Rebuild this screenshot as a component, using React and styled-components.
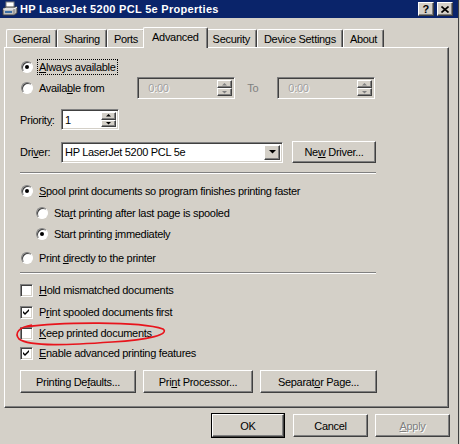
import styled, { createGlobalStyle, css } from 'styled-components'

const GlobalStyle = createGlobalStyle`
  html, body {
    margin: 0;
    padding: 0;
    background: #d4d0c8;
  }
  body {
    font-family: "Liberation Sans", Arial, sans-serif;
    font-size: 11px;
    letter-spacing: -0.3px;
    color: #000;
  }
  * { box-sizing: border-box; }
`

const raised = css`
  border: 1px solid;
  border-color: #fff #404040 #404040 #fff;
  box-shadow: inset -1px -1px #808080;
`

const sunken = css`
  border: 1px solid;
  border-color: #808080 #fff #fff #808080;
  box-shadow: inset 1px 1px #404040, inset -1px -1px #d4d0c8;
`

const Window = styled.div`
  position: relative;
  width: 459px;
  height: 444px;
  background: #d4d0c8;
  border-right: 1px solid #404040;
  display: flex;
  flex-direction: column;
`

const TitleBar = styled.div`
  height: 18px;
  background: #0a246a;
  color: #fff;
  display: flex;
  align-items: center;
  padding: 0 5px 0 2px;
  font-weight: bold;
  font-size: 11px;
  letter-spacing: 0.3px;
`

const Title = styled.span`
  flex: 1;
  margin-left: 2px;
`

const CaptionButton = styled.span`
  width: 16px;
  height: 14px;
  background: #d4d0c8;
  ${raised};
  color: #000;
  display: flex;
  align-items: center;
  justify-content: center;
  margin-left: ${p => p.$gap || 0}px;
  font-size: 11px;
  font-weight: bold;
`

const Body = styled.div`
  padding: 9px 0 0 4px;
`

const TabStrip = styled.div`
  display: flex;
  align-items: flex-end;
  padding-left: 2px;
  height: 20px;
  position: relative;
  z-index: 1;
`

const Tab = styled.div`
  height: 18px;
  padding: 1px 6px 0;
  display: flex;
  align-items: center;
  background: #d4d0c8;
  border-top: 1px solid #fff;
  border-left: 1px solid #fff;
  border-right: 1px solid #404040;
  box-shadow: inset -1px 0 #808080;
  border-radius: 2px 2px 0 0;

  ${p => p.$active && css`
    height: 21px;
    margin: 0 -2px -1px;
    padding: 0 8px 3px;
    position: relative;
    z-index: 2;
  `}
`

const Panel = styled.div`
  width: 445px;
  ${raised};
  padding: 9px 14px 14px 15px;
  display: flex;
  flex-direction: column;
`

const Row = styled.div`
  display: flex;
  align-items: center;
  height: ${p => p.$h || 20}px;
  margin-top: ${p => p.$mt || 0}px;
  padding-left: ${p => p.$indent || 0}px;
`

const RadioCircle = styled.span`
  width: 12px;
  height: 12px;
  flex-shrink: 0;
  margin-left: 1px;
  border-radius: 50%;
  position: relative;
  background: #fff;
  border: 1px solid;
  border-color: #808080 #fff #fff #808080;
  box-shadow: inset 1px 1px #404040;

  &::after {
    content: '';
    display: ${p => (p.$checked ? 'block' : 'none')};
    position: absolute;
    left: 3px;
    top: 3px;
    width: 4px;
    height: 4px;
    border-radius: 50%;
    background: #000;
  }
`

const CheckBox = styled.span`
  width: 13px;
  height: 13px;
  flex-shrink: 0;
  background: #fff;
  ${sunken};
  display: flex;
  align-items: center;
  justify-content: center;
`

const Label = styled.span`
  margin-left: ${p => p.$ml ?? 4}px;
  padding: 1px 1px;
  border: 1px dotted ${p => (p.$focus ? '#000' : 'transparent')};
  white-space: nowrap;
  color: ${p => (p.$disabled ? '#808080' : '#000')};
`

const FieldLabel = styled.span`
  width: 41px;
  flex-shrink: 0;
`

const Field = styled.div`
  width: ${p => p.$w}px;
  height: ${p => p.$h || 22}px;
  margin-left: ${p => p.$ml || 0}px;
  ${sunken};
  background: ${p => (p.$disabled ? '#d4d0c8' : '#fff')};
  color: ${p => (p.$disabled ? '#a0a0a0' : '#000')};
  display: flex;
  align-items: center;
  padding: 2px 2px 2px ${p => p.$pl || 3}px;
`

const FieldText = styled.span`
  flex: 1;
  white-space: nowrap;
  text-shadow: ${p => (p.$disabled ? '1px 1px #fff' : 'none')};
`

const SpinStack = styled.div`
  width: 15px;
  height: 100%;
  display: flex;
  flex-direction: column;
`

const SpinButton = styled.span`
  flex: 1;
  background: #d4d0c8;
  ${raised};
  display: flex;
  align-items: center;
  justify-content: center;
`

const DropButton = styled.span`
  width: 16px;
  height: 100%;
  background: #d4d0c8;
  ${raised};
  display: flex;
  align-items: center;
  justify-content: center;
`

const Separator = styled.div`
  width: 356px;
  height: 2px;
  margin-top: ${p => p.$mt || 0}px;
  border-top: 1px solid #808080;
  border-bottom: 1px solid #fff;
`

const Button = styled.button`
  font: inherit;
  letter-spacing: inherit;
  color: ${p => (p.$disabled ? '#808080' : '#000')};
  text-shadow: ${p => (p.$disabled ? '1px 1px #fff' : 'none')};
  width: ${p => p.$w}px;
  height: ${p => p.$h || 23}px;
  margin-left: ${p => p.$ml || 0}px;
  background: #d4d0c8;
  padding: 0;
  ${raised};
  ${p => p.$default && css`
    outline: 1px solid #000;
    outline-offset: 0;
  `}
`

const ButtonRow = styled.div`
  display: flex;
  align-items: center;
  margin-top: ${p => p.$mt || 0}px;
  justify-content: ${p => p.$end ? 'flex-end' : 'flex-start'};
  width: ${p => p.$w ? p.$w + 'px' : 'auto'};
`

const Ink = styled.svg`
  position: absolute;
  left: 0;
  top: 0;
  pointer-events: none;
`

const U = styled.u`
  text-decoration: underline;
  text-underline-offset: 1px;
`

function Arrow ({ dir = 'down', color = '#000', size = 3 }) {
  const w = size * 2 + 1
  const pts = dir === 'down'
    ? `0,0 ${w},0 ${size + 0.5},${size + 0.5}`
    : `0,${size + 0.5} ${w},${size + 0.5} ${size + 0.5},0`
  return (
    <svg width={w} height={size + 1} viewBox={`0 0 ${w} ${size + 1}`}>
      <polygon points={pts} fill={color} />
    </svg>
  )
}

function Spinner ({ disabled }) {
  const c = disabled ? '#808080' : '#000'
  return (
    <SpinStack>
      <SpinButton><Arrow dir='up' color={c} size={2} /></SpinButton>
      <SpinButton><Arrow dir='down' color={c} size={2} /></SpinButton>
    </SpinStack>
  )
}

function Radio ({ checked, children, focus, indent, mt }) {
  return (
    <Row $mt={mt} $indent={indent}>
      <RadioCircle $checked={checked} />
      <Label $focus={focus}>{children}</Label>
    </Row>
  )
}

function Check ({ checked, children, mt }) {
  return (
    <Row $mt={mt}>
      <CheckBox>
        {checked && (
          <svg width='7' height='7' viewBox='0 0 7 7'>
            <path d='M0 2 L2 4 L6 0 L6 2 L2 6 L0 4 Z' fill='#000' />
          </svg>
        )}
      </CheckBox>
      <Label>{children}</Label>
    </Row>
  )
}

function PrinterIcon () {
  return (
    <svg width='16' height='16' viewBox='0 0 16 16'>
      <rect x='4' y='1' width='8' height='6' fill='#fff' stroke='#808080' />
      <path d='M1 8 L4 6 L15 6 L15 12 L12 14 L1 14 Z' fill='#c0c0c0' stroke='#404040' />
      <path d='M1 8 L12 8 L15 6' fill='none' stroke='#fff' />
      <rect x='3' y='10' width='7' height='2' fill='#3a6ea5' />
      <path d='M12 8 L12 14' stroke='#808080' />
    </svg>
  )
}

const tabs = ['General', 'Sharing', 'Ports', 'Advanced', 'Security', 'Device Settings', 'About']

export default function App () {
  return (
    <>
      <GlobalStyle />
      <Window>
        <TitleBar>
          <PrinterIcon />
          <Title>HP LaserJet 5200 PCL 5e Properties</Title>
          <CaptionButton>?</CaptionButton>
          <CaptionButton $gap={3}>
            <svg width='8' height='7' viewBox='0 0 8 7'>
              <path d='M0.5 0.5 L7.5 6.5 M7.5 0.5 L0.5 6.5' stroke='#000' strokeWidth='1.6' />
            </svg>
          </CaptionButton>
        </TitleBar>
        <Body>
          <TabStrip>
            {tabs.map(t => (
              <Tab key={t} $active={t === 'Advanced'}>{t}</Tab>
            ))}
          </TabStrip>
          <Panel>
            <Radio checked focus><U>A</U>lways available</Radio>
            <Row $h={22}>
              <RadioCircle />
              <Label>Availa<U>b</U>le from</Label>
              <Field $w={98} $ml={31} $pl={10} $disabled>
                <FieldText $disabled>0:00</FieldText>
                <Spinner disabled />
              </Field>
              <Label $ml={10} $disabled>To</Label>
              <Field $w={98} $ml={17} $pl={10} $disabled>
                <FieldText $disabled>0:00</FieldText>
                <Spinner disabled />
              </Field>
            </Row>
            <Row $h={21} $mt={10}>
              <FieldLabel>Priorit<U>y</U>:</FieldLabel>
              <Field $w={58} $h={21}>
                <FieldText>1</FieldText>
                <Spinner />
              </Field>
            </Row>
            <Row $h={22} $mt={11}>
              <FieldLabel>Dri<U>v</U>er:</FieldLabel>
              <Field $w={222} $h={21}>
                <FieldText>HP LaserJet 5200 PCL 5e</FieldText>
                <DropButton><Arrow /></DropButton>
              </Field>
              <Button $w={84} $h={22} $ml={9}>Ne<U>w</U> Driver...</Button>
            </Row>
            <Separator $mt={9} />
            <Radio checked mt={7}><U>S</U>pool print documents so program finishes printing faster</Radio>
            <Radio indent={15} mt={2}>Sta<U>r</U>t printing after last page is spooled</Radio>
            <Radio checked indent={15} mt={1}>Start printing <U>i</U>mmediately</Radio>
            <Radio mt={4}>Print <U>d</U>irectly to the printer</Radio>
            <Separator $mt={4} />
            <Check mt={6}><U>H</U>old mismatched documents</Check>
            <Check checked mt={2}>P<U>r</U>int spooled documents first</Check>
            <Check mt={1}><U>K</U>eep printed documents</Check>
            <Check checked><U>E</U>nable advanced printing features</Check>
            <ButtonRow $mt={7}>
              <Button $w={116}>Printing De<U>f</U>aults...</Button>
              <Button $w={110} $ml={7}>Pri<U>n</U>t Processor...</Button>
              <Button $w={117} $ml={7}>Separat<U>o</U>r Page...</Button>
            </ButtonRow>
          </Panel>
          <ButtonRow $mt={6} $end $w={446}>
            <Button $w={72} $default>OK</Button>
            <Button $w={75} $ml={9}>Cancel</Button>
            <Button $w={75} $ml={7} $disabled><U>A</U>pply</Button>
          </ButtonRow>
        </Body>
        <Ink width='460' height='444' viewBox='0 0 460 444'>
          <path
            d='M24 327 C60 322, 140 321, 163 329 C170 334, 150 340, 112 342 C70 345, 30 347, 19 339 C14 333, 19 327, 32 325'
            fill='none'
            stroke='#e8141c'
            strokeWidth='1.6'
          />
        </Ink>
      </Window>
    </>
  )
}
